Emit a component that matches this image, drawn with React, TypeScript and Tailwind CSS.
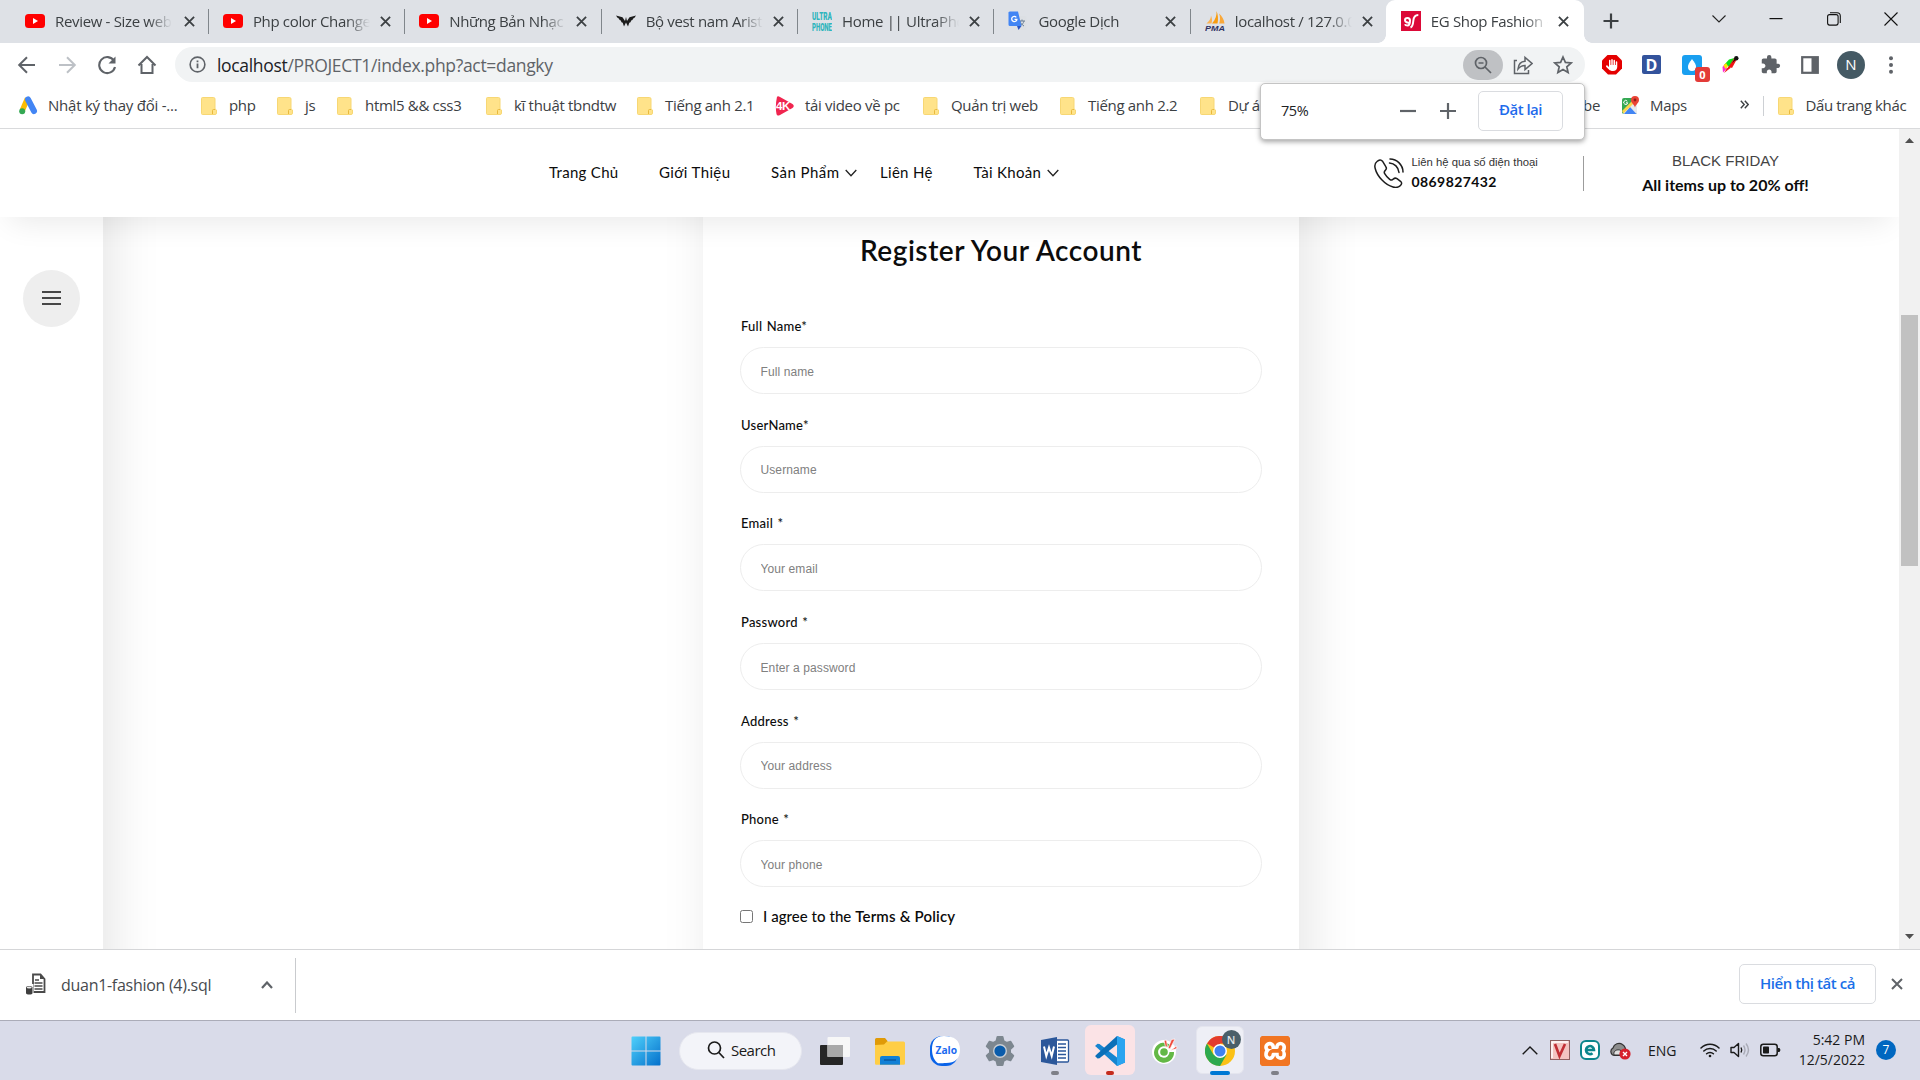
import React from 'react'
import { FaHand } from 'react-icons/fa6'
import { SiXampp } from 'react-icons/si'
import { MdExtension } from 'react-icons/md'

const Cross = ({ className }: { className: string }) => (
  <svg viewBox="0 0 12 12" className={className} fill="none" stroke="currentColor" strokeWidth="2">
    <path d="M1 1l10 10M11 1L1 11" />
  </svg>
)

const YouTube = () => (
  <svg viewBox="0 0 20 20" className="size-5">
    <rect y="3" width="20" height="14" rx="3.5" fill="#f00" />
    <path d="M8 7v6l5-3z" fill="#fff" />
  </svg>
)
const Wings = () => (
  <svg viewBox="0 0 20 20" className="size-5" fill="#1c1c1c">
    <path d="M0 4.500l6.500 1.800L9 10l1-4 1 4 2.500-3.700L20 4.500l-1.500 2.300-1.300.6-.8 1.600-1.200.6-.7 1.700-1.200.5L12 15.500l-2-4-2 4-1.300-3.700-1.200-.5-.7-1.700L3.600 9l-.8-1.600-1.300-.6z" />
  </svg>
)
const Ultra = () => (
  <svg viewBox="0 0 20 26" className="h-[26px] w-5" fill="#2fb5bd" fontFamily="Roboto, sans-serif" fontWeight="900" fontSize="11.500">
    <text x="0" y="12" textLength="20" lengthAdjust="spacingAndGlyphs">ULTRA</text>
    <text x="0" y="23" textLength="20" lengthAdjust="spacingAndGlyphs">PHONE</text>
  </svg>
)
const Translate = () => (
  <svg viewBox="0 0 20 20" className="size-5">
    <path d="M7 5h10a1.500 1.500 0 0 1 1.500 1.500v11A1.500 1.500 0 0 1 17 19h-6z" fill="#dcdfe3" />
    <path d="M11 10h6M14 8.500V10m-2 0c.5 2 2 4 4 5m0-5c-.5 2-2 4-4 5" stroke="#6b7f95" strokeWidth="1" fill="none" />
    <path d="M2 .5H10l3.500 14.500H2A1.500 1.500 0 0 1 .5 13.500v-11A1.500 1.500 0 0 1 2 .5z" fill="#4285f4" />
    <path d="M9 15h4.500l-3 4z" fill="#2a56c6" />
    <path d="M8.300 6.300A2.600 2.600 0 1 0 8.900 8.300H6.500" stroke="#fff" strokeWidth="1.300" fill="none" />
  </svg>
)
const Pma = () => (
  <svg viewBox="0 0 20 20" className="size-5">
    <path d="M11.500 0c.5 4-1 8.500-4.500 12.500h5.500c1-4.500.5-9-1-12.500z" fill="#f89c0e" />
    <path d="M6 4.500c0 3-2 6-4.500 8H6.500C7.500 9.500 7 7 6 4.500z" fill="#fbb454" />
    <path d="M14 2.500c1.500 3.500 1.200 7 .2 10h5.300c-.5-4-2.500-7.500-5.500-10z" fill="#f9a83a" />
    <text x="0" y="19.500" textLength="20" lengthAdjust="spacingAndGlyphs" fill="#2f3262" fontSize="7.500" fontWeight="700" fontStyle="italic" fontFamily="'Liberation Sans', sans-serif">PMA</text>
  </svg>
)
const EgShop = () => (
  <svg viewBox="0 0 20 20" className="size-5">
    <rect width="20" height="20" fill="#dc0a38" />
    <path d="M9 11.500c-2.500.5-5-.3-5-2.200C4 7.500 5.300 7 6.500 7S9 7.700 9 9.500s0 5-2.500 5c-1.500 0-2.300-.6-2.500-1.300M9.500 16.500c2-.8 2.500-3 2.800-6.500.3-4 1.700-6 5-6" stroke="#fff" strokeWidth="2" fill="none" />
  </svg>
)

const tabs = [
  { title: 'Review - Size web', icon: <YouTube /> },
  { title: 'Php color Change', icon: <YouTube /> },
  { title: 'Những Bản Nhạc', icon: <YouTube /> },
  { title: 'Bộ vest nam Arist', icon: <Wings /> },
  { title: 'Home || UltraPhon', icon: <Ultra /> },
  { title: 'Google Dịch', icon: <Translate /> },
  { title: 'localhost / 127.0.0.1', icon: <Pma /> },
  { title: 'EG Shop Fashion - E', icon: <EgShop />, active: true },
]

function TabStrip() {
  return (
    <div className="flex h-[43px] bg-[#dee1e6] pl-[12.500px] text-[#3c4043]">
      {tabs.map((t, i) => (
        <div
          key={t.title}
          className={
            t.active
              ? 'relative -ml-px flex h-[43px] w-[198px] shrink-0 items-center rounded-t-[9px] bg-white pb-px pl-[14.500px]'
              : i === 0
                ? 'relative flex h-[43px] w-[196.400px] shrink-0 items-center pb-px pl-[12.500px]'
                : 'relative flex h-[43px] w-[196.400px] shrink-0 items-center pb-px pl-[14px]'
          }
        >
          <span className="flex w-5 shrink-0 items-center">{t.icon}</span>
          <span className="ml-2.5 w-[117px] shrink-0 overflow-hidden whitespace-nowrap text-[15px] leading-6 tracking-[-0.022em] [mask-image:linear-gradient(to_right,#000_80%,transparent)]">
            {t.title}
          </span>
          <Cross className={i === 0 ? 'ml-3 size-[11px] shrink-0' : 'ml-2.5 size-[11px] shrink-0'} />
          {i < 6 && <span className="absolute right-0 top-[9px] h-[25px] w-px bg-[#80868b]" />}
          {t.active && (
            <>
              <span className="absolute -left-2 bottom-0 size-2 bg-[radial-gradient(circle_at_0_0,#dee1e6_7.500px,#fff_8px)]" />
              <span className="absolute -right-2 bottom-0 size-2 bg-[radial-gradient(circle_at_100%_0,#dee1e6_7.500px,#fff_8px)]" />
            </>
          )}
        </div>
      ))}
      <svg viewBox="0 0 16 16" className="ml-[18.500px] mt-[13px] size-4 shrink-0" stroke="#3c4043" strokeWidth="2.200"><path d="M8 .5v15M.5 8h15" /></svg>
      <svg viewBox="0 0 14 14" className="ml-[93px] mt-3 size-3.5 shrink-0" fill="none" stroke="#222" strokeWidth="1.100"><path d="M.5 3.500L7 10 13.500 3.500" /></svg>
      <svg viewBox="0 0 14 14" className="ml-[43px] mt-3 size-3.5 shrink-0" fill="none" stroke="#111" strokeWidth="1.200"><path d="M.5 6.600h13" /></svg>
      <svg viewBox="0 0 14 14" className="ml-11 mt-3 size-3.5 shrink-0" fill="none" stroke="#111" strokeWidth="1.100"><rect x=".6" y="2.600" width="10.500" height="10.500" rx="2" /><path d="M3 .7h7A3.300 3.300 0 0 1 13.300 4v7" /></svg>
      <svg viewBox="0 0 14 14" className="ml-[43px] mt-3 size-3.5 shrink-0" fill="none" stroke="#111" strokeWidth="1.100"><path d="M.5.5l13 13M13.500.5l-13 13" /></svg>
    </div>
  )
}

function Toolbar() {
  return (
    <div className="flex h-[43px] items-center bg-white pl-[17px] pb-px pt-px text-[#5f6368]">
      <svg viewBox="0 0 20 20" className="size-5" fill="none" stroke="#5f6368" strokeWidth="2"><path d="M18 10H2.500M10 2.200L2.200 10l7.800 7.800" /></svg>
      <svg viewBox="0 0 20 20" className="ml-5 size-5" fill="none" stroke="#bdc1c6" strokeWidth="2"><path d="M2 10h15.500M10 2.200l7.800 7.800-7.800 7.800" /></svg>
      <svg viewBox="0 0 20 20" className="ml-5 size-5" fill="none" stroke="#5f6368" strokeWidth="2.100"><path d="M17 5.800A8 8 0 1 0 18 12" /><path d="M18.500 1.500v7h-7z" fill="#5f6368" stroke="none" /></svg>
      <svg viewBox="0 0 20 20" className="ml-5 size-5" fill="none" stroke="#5f6368" strokeWidth="2"><path d="M1.500 10.500L10 2l8.500 8.500M4.500 9v9h11V9" /></svg>
      <div className="ml-[18px] flex h-[35px] w-[1410px] items-center rounded-full bg-[#f1f3f4] pl-3.5">
        <svg viewBox="0 0 18 18" className="size-[17px] shrink-0" fill="none" stroke="#5f6368"><circle cx="9" cy="9" r="7.800" strokeWidth="1.700" /><path d="M9 8v5M9 4.800v1.700" strokeWidth="1.900" /></svg>
        <span className="ml-[11px] w-[1246px] shrink-0 whitespace-nowrap text-[17.500px] leading-7 tracking-[-0.0185em]">
          <span className="text-[#202124]">localhost</span>/PROJECT1/index.php?act=dangky
        </span>
        <span className="flex h-[30px] w-10 shrink-0 items-center justify-center rounded-full bg-[#bfc1c4]">
          <svg viewBox="0 0 18 18" className="size-[18px]" fill="none" stroke="#5f6368" strokeWidth="1.700"><circle cx="7" cy="7" r="5.500" /><path d="M11 11l6 6M4.500 7h5" /></svg>
        </span>
        <svg viewBox="0 0 20 20" className="ml-2.5 size-5" fill="none" stroke="#5f6368" strokeWidth="1.500"><path d="M4 5.500H1.500v13h14V15" /><path d="M5 14c.5-5 3-7.500 7-7.700V2.500l7 6-7 6v-4C9 10.500 7 11.500 5 14z" /></svg>
        <svg viewBox="0 0 20 20" className="ml-5 size-5" fill="none" stroke="#5f6368" strokeWidth="1.700"><path d="M10 2l2.400 5.400 5.800.5-4.400 3.900 1.300 5.700-5.100-3-5.100 3 1.300-5.700L1.800 7.900l5.800-.5z" /></svg>
      </div>
      <span className="ml-[17px] flex size-5 items-center justify-center bg-[#e40000] [clip-path:polygon(30%_0,70%_0,100%_30%,100%_70%,70%_100%,30%_100%,0_70%,0_30%)]"><FaHand className="size-3 text-white" /></span>
      <span className="ml-5 flex h-[19px] w-[19px] items-center justify-center rounded-[2px] bg-[#33539c] text-[16px] font-bold leading-none text-white">D</span>
      <span className="relative ml-[21px] size-5 rounded-[3px] bg-[#199ff0]">
        <svg viewBox="0 0 20 20" className="size-5"><path d="M10 4c3 4 4 5.500 4 8a4 4 0 0 1-8 0c0-2.500 1-4 4-8z" fill="#fff" /></svg>
        <span className="absolute left-[13px] top-[12px] flex h-[15px] w-[15px] items-center justify-center rounded-[3px] bg-[#e33b38] text-[11px] font-bold leading-none text-white">0</span>
      </span>
      <svg viewBox="0 0 20 20" className="ml-[18px] size-5">
        <path d="M4 10l5-5.500L14.500 3 10 12z" fill="#0be01a" /><path d="M2.500 12l2.500-3 2 4.500-4 4z" fill="#ff2ad4" /><path d="M4 18l6.500-5 2-6-6 7z" fill="#f01414" /><path d="M3.500 10.500L6 8l2 3-2.500 3z" fill="#ffe600" /><path d="M9 11.500l5.500-9 2.500 1.500-5 9z" fill="#f01414" /><path d="M12 8l4-6 1.500 1.500z" fill="#111" /><circle cx="16.300" cy="3.300" r="2.200" fill="#111" />
      </svg>
      <MdExtension className="ml-[20px] size-[21px]" />
      <svg viewBox="0 0 18 18" className="ml-5 size-[18px]" fill="none" stroke="#5f6368"><rect x="1.200" y="1.200" width="15.600" height="15.600" strokeWidth="2.200" /><path d="M13.500 1v16" strokeWidth="6" /></svg>
      <span className="ml-[18px] flex size-7 items-center justify-center rounded-full bg-[#455a64] text-[15px] text-white">N</span>
      <svg viewBox="0 0 6 18" className="ml-[23px] h-[18px] w-1.5" fill="#5f6368"><circle cx="3" cy="2.300" r="2" /><circle cx="3" cy="9" r="2" /><circle cx="3" cy="15.700" r="2" /></svg>
    </div>
  )
}

const FolderIcon = () => (
  <svg viewBox="0 0 16 18" className="h-[18px] w-4 shrink-0">
    <path d="M1.500.5h11A1.500 1.500 0 0 1 14 2v10l1.500 1v3a1.500 1.500 0 0 1-1.500 1.500H1.500A1 1 0 0 1 .5 16.500v-15a1 1 0 0 1 1-1z" fill="#ffe38a" stroke="#f7d774" />
    <path d="M11.500 17v-3.500a1 1 0 0 1 1-1H14" stroke="#e9b93c" fill="none" />
  </svg>
)
const MapsIcon = () => (
  <svg viewBox="0 0 19 19" className="size-[19px] shrink-0">
    <rect x="1" y="2" width="15" height="16" rx="2" fill="#34a853" />
    <path d="M2 17L14 4l2 2v11l-1 1H3z" fill="#e8eaed" />
    <path d="M3 18l6-7 6.500 7z" fill="#4285f4" />
    <path d="M1 15L13 3l2 2L2.500 17.500z" fill="#fbd44c" />
    <path d="M6.300 5.200A2 2 0 1 0 6.700 6.800H5" stroke="#fff" strokeWidth="1" fill="none" />
    <path d="M14 0a4 4 0 0 1 4 4c0 3-3 4-4 7.500C13 8 10 7 10 4a4 4 0 0 1 4-4z" fill="#ea4335" /><circle cx="14" cy="4" r="1.400" fill="#8c2019" />
  </svg>
)

function Bookmarks() {
  const folders1 = [
    { t: 'php', w: 'w-[76px]' },
    { t: 'js', w: 'w-[60px]' },
    { t: 'html5 && css3', w: 'w-[149px]' },
    { t: 'kĩ thuật tbndtw', w: 'w-[151px]' },
    { t: 'Tiếng anh 2.1', w: 'w-[138px]' },
  ]
  const folders2 = [
    { t: 'Quản trị web', w: 'w-[137px]' },
    { t: 'Tiếng anh 2.2', w: 'w-[140px]' },
    { t: 'Dự án 1', w: 'w-[320px]' },
  ]
  const folder = (f: { t: string; w: string }) => (
    <span key={f.t} className={`${f.w} flex shrink-0 items-center gap-3`}>
      <FolderIcon />
      {f.t}
    </span>
  )
  return (
    <div className="relative flex h-[43px] items-center whitespace-nowrap border-b border-[#d9dadc] bg-white pb-[3px] pl-[19px] text-[15px] tracking-[-0.021em] text-[#3c4043]">
      <span className="flex w-[182px] shrink-0 items-center gap-2.5 tracking-[-0.015em]">
        <svg viewBox="0 0 19 19" className="size-[19px]">
          <path d="M8.500 2.500L3.500 14" stroke="#fbbc04" strokeWidth="5.500" />
          <path d="M9 3.500l6 11.500" stroke="#4285f4" strokeWidth="6" strokeLinecap="round" />
          <circle cx="3.200" cy="15.300" r="3" fill="#34a853" />
        </svg>
        Nhật ký thay đổi -...
      </span>
      {folders1.map(folder)}
      <span className="flex w-[148px] shrink-0 items-center gap-2.5">
        <svg viewBox="0 0 20 20" className="size-5">
          <path d="M2 .8Q3-.3 5 1l12.500 7q2.500 2 0 4L5 19q-3 1.500-3.500-1Q0 10 2 .8z" fill="#f0254f" />
          <text x="1" y="14" textLength="14" lengthAdjust="spacingAndGlyphs" fontSize="11" fontWeight="700" fill="#fff" fontFamily="'Liberation Sans', sans-serif">4K</text>
        </svg>
        tải video về pc
      </span>
      {folders2.map(folder)}
      <span className="flex w-[101px] shrink-0 items-center justify-end pr-[21px]">Youtube</span>
      <span className="flex w-[119px] shrink-0 items-center gap-[10px]"><MapsIcon />Maps</span>
      <svg viewBox="0 0 9 9" className="size-[9px] shrink-0 -translate-y-px" fill="none" stroke="#3c4043" strokeWidth="1.400"><path d="M.8.8l3.400 3.700L.8 8.200M4.800.8l3.400 3.700-3.400 3.700" /></svg>
      <span className="ml-[13.500px] h-5 w-px bg-[#cdd0d4]" />
      <span className="ml-3.5 flex items-center gap-3 tracking-[-0.025em]"><FolderIcon />Dấu trang khác</span>
      <div className="absolute left-[1260px] top-[-3px] z-30 flex h-[57px] w-[325px] items-center rounded-[5px] border border-[#c4c4c4] bg-white pb-0.5 pl-5 shadow-[0_2px_5px_rgba(0,0,0,0.35)]">
        <span className="w-[119px] text-[14.500px] leading-5 tracking-[-0.03em] text-[#202124]">75%</span>
        <svg viewBox="0 0 16 16" className="size-4" stroke="#5f6368" strokeWidth="2.200"><path d="M0 8h16" /></svg>
        <svg viewBox="0 0 16 16" className="ml-6 size-4" stroke="#5f6368" strokeWidth="2.200"><path d="M0 8h16M8 0v16" /></svg>
        <span className="ml-[22px] flex h-10 w-[85px] items-center justify-center rounded-[5px] border border-[#dadce0] pb-0.5 text-[15px] font-semibold tracking-[-0.035em] text-[#1f6bec]">Đặt lại</span>
      </div>
    </div>
  )
}

const Chevron = () => (
  <svg viewBox="0 0 12 8" className="ml-1.5 h-2 w-3" fill="none" stroke="#222" strokeWidth="1.300"><path d="M.7 1L6 6.800 11.300 1" /></svg>
)

function SiteHeader() {
  return (
    <header className="relative z-10 flex h-[88px] shrink-0 items-center bg-white pl-[549px] font-[Lato,sans-serif] text-[15px] text-[#0c0c0c] shadow-[0_15px_30px_-10px_rgba(0,0,0,0.09)]">
      <nav className="flex whitespace-nowrap pb-px tracking-[0.02em]">
        <a className="w-[110px]">Trang Chủ</a>
        <a className="w-[112px] tracking-[0.025em]">Giới Thiệu</a>
        <a className="flex w-[109px] items-center tracking-[0.03em]">Sản Phẩm<Chevron /></a>
        <a className="w-[93.500px]">Liên Hệ</a>
        <a className="flex w-[400.500px] items-center">Tài Khoản<Chevron /></a>
      </nav>
      <svg viewBox="0 0 30 30" className="size-[30px] shrink-0" fill="none" stroke="#1d1d1d" strokeWidth="1.500" strokeLinecap="round">
        <path d="M3 3.500c-2 1.500-2.600 4-1.800 7C3 18 11 27 19 29c3 .8 5.500.5 7.500-1.500 1.500-1.500 1.500-2.800 0-4.200l-3.500-2.600c-1.500-1-2.500-.8-3.700.4-1.200 1.300-2.300 1.200-3.600.2-2-1.500-3.800-3.600-5-5.700-.8-1.400-.6-2.300.6-3.300 1.300-1.100 1.500-2.200.5-3.600L8.500 3.200C7 1.300 5 1.700 3 3.500z" />
        <path d="M16 1c7 0 13 6 13 13M15.500 5c5 .3 9 4.200 9.500 9.500" />
      </svg>
      <div className="ml-[7.500px] w-[171px] whitespace-nowrap pb-0.5">
        <div className="font-['Liberation_Sans',sans-serif] text-[11.300px] leading-[20px] text-[#333]">Liên hệ qua số điện thoại</div>
        <div className="text-[14px] font-bold leading-[20px] tracking-[0.03em]">0869827432</div>
      </div>
      <div className="h-[35px] w-px bg-[#9c9c9c]" />
      <div className="ml-[58px] w-[168px] whitespace-nowrap text-center">
        <div className="font-['Liberation_Sans',sans-serif] text-[15px] leading-[25px] text-[#444]">BLACK FRIDAY</div>
        <div className="-mt-px mb-px text-[16px] font-bold leading-[25px]">All items up to 20% off!</div>
      </div>
    </header>
  )
}

const fields = [
  ['Full Name*', 'Full name'],
  ['UserName*', 'Username'],
  ['Email *', 'Your email'],
  ['Password *', 'Enter a password'],
  ['Address *', 'Your address'],
  ['Phone *', 'Your phone'],
]

function RegisterCard() {
  return (
    <div className="-my-24 ml-[600px] h-[950px] w-[596px] shrink-0 bg-white px-[37px] pt-[109px] font-[Lato,sans-serif] text-[#0c0c0c] shadow-[10px_10px_50px_rgba(0,0,0,0.1)]">
      <h1 className="mb-[46px] text-center text-[28px] font-semibold leading-10 tracking-[0.019em]">Register Your Account</h1>
      <div className="flex flex-col gap-[20.700px]">
        {fields.map(([label, ph]) => (
          <label key={label} className="flex flex-col gap-[11px]">
            <span className="pl-px text-[13px] font-medium leading-5 tracking-[0.018em] [word-spacing:1px]">{label}</span>
            <input
              placeholder={ph}
              className="h-[47px] w-[522px] rounded-full border border-[#ededed] bg-white px-[19.500px] pt-0.5 font-['Liberation_Sans',sans-serif] text-[12px] tracking-[0.1px] placeholder:text-[#808080]"
            />
          </label>
        ))}
      </div>
      <label className="mt-[17px] flex h-6 items-center text-[15px] font-medium">
        <span className="size-[13px] rounded-[2.500px] border border-[#767676] bg-white" />
        <span className="ml-2.5 whitespace-nowrap tracking-[0.003em]">I agree to the <b className="font-semibold tracking-[0.012em]">Terms &amp; Policy</b></span>
      </label>
    </div>
  )
}

function Viewport() {
  return (
    <div className="flex h-[820px] bg-white">
      <div className="flex w-[1899px] flex-col overflow-hidden">
        <SiteHeader />
        <div className="flex flex-1 overflow-hidden">
          <aside className="-my-24 h-[950px] w-[103px] shrink-0 bg-white pl-[23px] pt-[148.500px] shadow-[10px_10px_50px_rgba(0,0,0,0.1)]">
            <span className="flex size-[57px] items-center justify-center rounded-full bg-[#eee]">
              <svg viewBox="0 0 19 14" className="h-3.5 w-[19px]" stroke="#111" strokeWidth="1.300"><path d="M0 1h19M0 7h19M0 13h19" /></svg>
            </span>
          </aside>
          <RegisterCard />
        </div>
      </div>
      <div className="flex w-[21px] flex-col items-center bg-[#f1f1f1] pb-[10px] pt-[9px]">
        <svg viewBox="0 0 9 5" className="h-[5px] w-[9px]" fill="#505050"><path d="M0 5L4.500 0 9 5z" /></svg>
        <span className="mt-[172px] h-[251px] w-[17px] bg-[#c1c1c1]" />
        <svg viewBox="0 0 9 5" className="mt-auto h-[5px] w-[9px]" fill="#505050"><path d="M0 0l4.500 5L9 0z" /></svg>
      </div>
    </div>
  )
}

function DownloadShelf() {
  return (
    <div className="flex h-[71px] items-center border-t border-[#d5d6d8] bg-white pl-[26px] text-[#5f6368]">
      <svg viewBox="0 0 20 22" className="h-[22px] w-5 -translate-y-px">
        <path d="M7 1.500h7.500L18.500 6v13H7z" fill="#fff" stroke="#4a4a4a" strokeWidth="1.800" /><path d="M14 1v5h5z" fill="#4a4a4a" /><path d="M9 7h4M8.500 10h8M8.500 13h8M8.500 16h8" stroke="#4a4a4a" strokeWidth="1.300" />
        <path d="M-.5 11h8v11h-8z" fill="#fff" /><path d="M0 14.500c0-2 6.500-2 6.500 0v5.500c0 2-6.500 2-6.500 0z" fill="#3f3f3f" /><ellipse cx="3.200" cy="14.500" rx="2.500" ry="1" fill="#eee" />
      </svg>
      <span className="ml-[15px] w-[200px] whitespace-nowrap text-[16px] tracking-[-0.018em] text-[#474a4e]">duan1-fashion (4).sql</span>
      <svg viewBox="0 0 12 8" className="h-2 w-3" fill="none" stroke="#5f6368" strokeWidth="2.200"><path d="M1 7l5-5.500L11 7" /></svg>
      <span className="ml-[22px] h-[55px] w-px bg-[#c9cbce]" />
      <span className="mb-0.5 ml-auto flex h-10 w-[137px] items-center justify-center rounded-[5px] border border-[#dadce0] pb-px text-[15px] font-semibold tracking-[-0.03em] text-[#1a6fe8]">Hiển thị tất cả</span>
      <Cross className="mb-0.5 ml-[15px] mr-[17px] size-[12px]" />
    </div>
  )
}

const Slot = ({ children, dot, box }: { children: React.ReactNode; dot?: 'gray' | 'red' | 'blue'; box?: 'red' | 'white' }) => (
  <div className="relative flex h-[59px] w-[55px] shrink-0 items-center justify-center">
    {box && <span className={box === 'red' ? 'absolute left-[2.500px] top-1 h-[50px] w-[50px] rounded-md bg-[#fbe3e6]' : 'absolute left-[3.500px] top-[5px] h-12 w-12 rounded-md border border-[#e4e5ee] bg-[#eeeff6]'} />}
    <span className="relative flex">{children}</span>
    {dot && <span className={dot === 'gray' ? 'absolute bottom-[5px] h-1 w-2 rounded-full bg-[#7f8088]' : dot === 'red' ? 'absolute bottom-[5px] h-1 w-2 rounded-full bg-[#c42b1c]' : 'absolute bottom-[5px] h-1 w-5 rounded-full bg-[#0078d4]'} />}
  </div>
)

function Taskbar() {
  return (
    <div className="flex h-[60px] items-center border-t border-[#abacb8] bg-[#d9dbe9] pl-[631px] text-[#1a1a1a]">
      <svg viewBox="0 0 30 30" className="size-[30px] shrink-0">
        <defs><linearGradient id="win" x1="0" y1="0" x2="1" y2="1"><stop stopColor="#4fd0fb" /><stop offset="1" stopColor="#0470cb" /></linearGradient></defs>
        <path d="M1.500.5H14.500V14.500H.5V1.500a1 1 0 0 1 1-1zM15.500.5h13a1 1 0 0 1 1 1v13h-14zM.5 15.500h14v14h-13a1 1 0 0 1-1-1zM15.500 15.500h14v13a1 1 0 0 1-1 1h-13z" fill="url(#win)" />
      </svg>
      <div className="ml-[18px] flex h-[38px] w-[123px] shrink-0 items-center rounded-full border border-[#e6e7ef] bg-[#f3f4f9] pb-px pl-[27px]">
        <svg viewBox="0 0 18 18" className="size-[18px]" fill="none" stroke="#1a1a1a" strokeWidth="1.700"><circle cx="7.500" cy="7" r="6" /><path d="M11.800 11.500L17 17" /></svg>
        <span className="ml-1.5 text-[15px] tracking-[-0.035em]">Search</span>
      </div>
      <div className="ml-[5px] flex">
        <Slot>
          <svg viewBox="0 0 30 28" className="h-7 w-[30px]">
            <rect y="8" width="23" height="20" rx="1" fill="#262626" /><rect x="7.500" y="0" width="22.500" height="20" rx="1" fill="#f7f7f7" /><path d="M7.500 8H23v12H7.500z" fill="#a9a9a9" />
          </svg>
        </Slot>
        <Slot>
          <svg viewBox="0 0 30 28" className="h-7 w-[30px]">
            <path d="M0 2.500A1.500 1.500 0 0 1 1.500 1H10l2.500 3v6H0z" fill="#e09a07" /><path d="M0 8l9-.5 3-3H28.500A1.500 1.500 0 0 1 30 6v20.500a1.200 1.200 0 0 1-1.200 1.200H1.200A1.200 1.200 0 0 1 0 26.500z" fill="#ffce45" />
            <path d="M5 27.700V21a2 2 0 0 1 2-2h16a2 2 0 0 1 2 2v6.700z" fill="#1180d6" /><path d="M9 23h12" stroke="#0a58a0" strokeWidth="1.500" />
          </svg>
        </Slot>
        <Slot>
          <svg viewBox="0 0 30 30" className="size-[30px]">
            <rect width="28" height="30" rx="12" fill="#0a63e8" /><path d="M14 0c10 0 16 4 16 13.500S25 27 16 27c-3 0-5 .5-8 .2C4.500 25 2 20 2 13.500S4 0 14 0z" fill="#fff" />
            <text x="5.500" y="17.500" textLength="21.500" lengthAdjust="spacingAndGlyphs" fontSize="10.500" fontWeight="700" fill="#1a6af0" fontFamily="'Open Sans', sans-serif">Zalo</text>
          </svg>
        </Slot>
        <Slot>
          <svg viewBox="0 0 30 30" className="size-[30px]">
            <path d="M12.500 1h5l1 4.200 3 1.700 4-1.200 2.700 4.500-3.200 3v3.600l3.200 3-2.700 4.500-4-1.200-3 1.700-1 4.200h-5l-1-4.200-3-1.700-4 1.200-2.700-4.500 3.200-3v-3.600l-3.200-3 2.700-4.500 4 1.200 3-1.700z" fill="#7d8790" stroke="#7d8790" strokeWidth="2" strokeLinejoin="round" />
            <circle cx="15" cy="15" r="7" fill="#c9ced4" /><circle cx="15" cy="15" r="5.600" fill="#0a5cab" />
          </svg>
        </Slot>
        <Slot dot="gray">
          <svg viewBox="0 0 30 30" className="size-[30px]">
            <rect x="14" y="4" width="14.500" height="22" rx="1" fill="#fff" stroke="#2b579a" strokeWidth="1.300" /><path d="M18 8h8M18 11.500h8M18 15h8M18 18.500h8M18 22h8" stroke="#2b579a" strokeWidth="1.400" />
            <path d="M1 4L17 1v28L1 26z" fill="#2b579a" /><path d="M4 10.500l2.300 9.500L9 11.500l2.700 8.500L14 10.500" fill="none" stroke="#fff" strokeWidth="2" />
          </svg>
        </Slot>
        <Slot dot="red" box="red">
          <svg viewBox="0 0 30 30" className="size-[30px]">
            <path d="M22 0l8 3.500v23L22 30 1 10.800 0 10l2.500-2.300L4.500 8 22 21.500z" fill="#1685d0" /><path d="M22 0v8.500L4.500 22.300 2.500 22.500.5 20.500v-1z" fill="#0a6fb8" /><path d="M22 0l8 3.500v23L22 30z" fill="#2aa4f0" />
          </svg>
        </Slot>
        <Slot>
          <svg viewBox="0 0 28 28" className="size-7">
            <circle cx="13" cy="15" r="12" fill="#fff" /><path d="M20 8.500A10 10 0 1 0 23 15h-4.500a5.700 5.700 0 1 1-2.500-4.700z" fill="#63b846" /><circle cx="13" cy="15" r="3.800" fill="#63b846" />
            <path d="M14.500 10L13 3.500l2.500-.5 1 6.500zM17 11l3.500-8.500L24 2l-5 10zM19.500 13.500l6-4.500.5 2.500z" fill="#ef4b3e" stroke="#fff" strokeWidth=".7" />
          </svg>
        </Slot>
        <Slot dot="blue" box="white">
          <svg viewBox="0 0 30 30" className="size-[30px]">
            <circle cx="15" cy="15" r="15" fill="#fbc116" /><path d="M15 15L2 7.500A15 15 0 0 1 28 7.500H15z" fill="#e33b2e" /><path d="M2 7.500A15 15 0 0 0 15 30l6.500-11.300L15 15 8.500 18.700z" fill="#2da94f" />
            <circle cx="15" cy="15" r="7" fill="#fff" /><circle cx="15" cy="15" r="5.500" fill="#3f82f1" />
          </svg>
          <span className="absolute left-[17px] top-[-6px] flex size-[19px] items-center justify-center rounded-full bg-[#4a5f69] text-[11px] font-semibold leading-none text-[#dfe4e6]">N</span>
        </Slot>
        <Slot dot="gray">
          <span className="flex size-[30px] items-center justify-center rounded-[4px] bg-white ring-1 ring-inset ring-[#d05a10]"><SiXampp className="size-[30px] text-[#f17522]" /></span>
        </Slot>
      </div>
      <div className="ml-auto flex items-center pb-px">
        <svg viewBox="0 0 16 9" className="h-[9px] w-4" fill="none" stroke="#1a1a1a" strokeWidth="1.400"><path d="M.7 8.300L8 1l7.300 7.300" /></svg>
        <svg viewBox="0 0 20 20" className="ml-3 size-5"><rect x=".5" y=".5" width="19" height="19" fill="#f3c4c1" stroke="#8d6060" /><path d="M2 18V2h16" stroke="#fff" strokeWidth="1.500" fill="none" /><path d="M5 4l4.500 12L15 4" stroke="#c12f35" strokeWidth="2.600" fill="none" /></svg>
        <svg viewBox="0 0 20 20" className="ml-2.5 size-5"><rect x="1" y="1" width="18" height="18" rx="5" fill="#fff" stroke="#0c868c" strokeWidth="2" /><path d="M6 10h8a4 4 0 1 0-1.500 3.200" stroke="#0c868c" strokeWidth="2.600" fill="none" /></svg>
        <svg viewBox="0 0 21 20" className="ml-2.5 h-5 w-[21px]"><path d="M4.500 15.500A4 4 0 0 1 3 8c1-4 6-6 9.500-3.500C14 5.500 15 7 15.500 8.500L12 15.500z" fill="#8d8d8d" stroke="#333" strokeWidth="1.200" /><path d="M4 15c-1-4 3-6.500 7-4.500l1 4.500z" fill="#e0e0e0" stroke="#333" strokeWidth="1" /><circle cx="15" cy="14" r="5.600" fill="#d6202c" /><path d="M13 12l4 4M17 12l-4 4" stroke="#fff" strokeWidth="1.400" /></svg>
        <span className="ml-[17px] w-[30px] whitespace-nowrap text-[14px]">ENG</span>
        <svg viewBox="0 0 20 16" className="ml-[22px] h-4 w-5" fill="none" stroke="#1a1a1a" strokeWidth="1.500" strokeLinecap="round"><path d="M1 6a12.500 12.500 0 0 1 18 0M3.800 9a8.700 8.700 0 0 1 12.400 0M6.600 11.800a4.800 4.800 0 0 1 6.800 0" /><circle cx="10" cy="14" r="1.300" fill="#1a1a1a" stroke="none" /></svg>
        <svg viewBox="0 0 20 16" className="ml-2.5 h-4 w-5" fill="none" stroke="#1a1a1a" strokeWidth="1.400" strokeLinejoin="round"><path d="M1 5.500h3L8.500 1.500v13L4 10.500H1z" /><path d="M11 5.500q1.500 2.500 0 5" /><path d="M13.500 3.500q3 4.500 0 9M16 1.500q5 6.500 0 13" stroke="#a9abb6" /></svg>
        <svg viewBox="0 0 21 14" className="ml-2.5 h-3.5 w-[21px]"><rect x=".8" y="1.300" width="16.400" height="11.400" rx="2.500" fill="none" stroke="#1a1a1a" strokeWidth="1.500" /><rect x="3" y="3.500" width="6" height="7" rx=".8" fill="#1a1a1a" /><path d="M18 5h1.500l1 2-1 2H18z" fill="#1a1a1a" /></svg>
        <div className="ml-[17px] w-[67px] whitespace-nowrap pb-px text-right text-[14px] leading-5">
          <div>5:42 PM</div>
          <div>12/5/2022</div>
        </div>
        <span className="ml-[11px] mr-6 flex size-5 items-center justify-center rounded-full bg-[#0067c0] text-[12px] leading-none text-white">7</span>
      </div>
    </div>
  )
}

export default function App() {
  return (
    <div className="h-[1080px] w-[1920px] overflow-hidden bg-white font-['Open_Sans','Noto_Sans',sans-serif]">
      <TabStrip />
      <Toolbar />
      <Bookmarks />
      <Viewport />
      <DownloadShelf />
      <Taskbar />
    </div>
  )
}
